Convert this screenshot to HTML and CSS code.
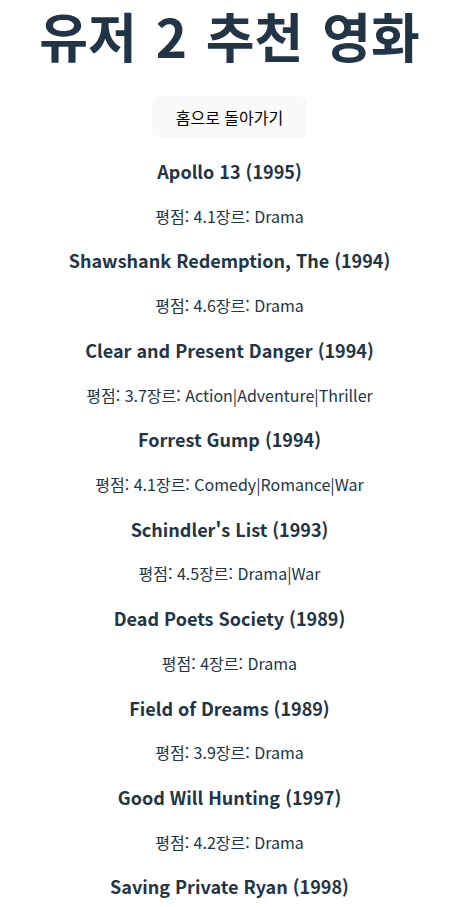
FILE: index.html
```html
<!DOCTYPE html>
<html lang="ko">
<head>
<meta charset="utf-8">
<title>유저 2 추천 영화</title>
<link rel="stylesheet" href="styles.css">
</head>
<body>
<div class="page">
  <h1 class="title">유저 2 추천 영화</h1>
  <button class="home-btn">홈으로 돌아가기</button>
  <ul class="movie-list">
    <li class="movie"><h3 class="movie-title">Apollo 13 (1995)</h3><p class="movie-info">평점: 4.1장르: Drama</p></li>
    <li class="movie"><h3 class="movie-title">Shawshank Redemption, The (1994)</h3><p class="movie-info">평점: 4.6장르: Drama</p></li>
    <li class="movie"><h3 class="movie-title">Clear and Present Danger (1994)</h3><p class="movie-info">평점: 3.7장르: Action|Adventure|Thriller</p></li>
    <li class="movie"><h3 class="movie-title">Forrest Gump (1994)</h3><p class="movie-info">평점: 4.1장르: Comedy|Romance|War</p></li>
    <li class="movie"><h3 class="movie-title">Schindler's List (1993)</h3><p class="movie-info">평점: 4.5장르: Drama|War</p></li>
    <li class="movie"><h3 class="movie-title">Dead Poets Society (1989)</h3><p class="movie-info">평점: 4장르: Drama</p></li>
    <li class="movie"><h3 class="movie-title">Field of Dreams (1989)</h3><p class="movie-info">평점: 3.9장르: Drama</p></li>
    <li class="movie"><h3 class="movie-title">Good Will Hunting (1997)</h3><p class="movie-info">평점: 4.2장르: Drama</p></li>
    <li class="movie"><h3 class="movie-title">Saving Private Ryan (1998)</h3><p class="movie-info">평점: 4.3장르: Action|Drama|War</p></li>
  </ul>
</div>
</body>
</html>
```
FILE: styles.css
```css
html, body {
  margin: 0;
  padding: 0;
  background: #ffffff;
}
body {
  font-family: "Noto Sans CJK KR", "Noto Sans", sans-serif;
  color: #213547;
  line-height: 1.5;
  font-size: 16px;
}
.page {
  width: 459px;
  display: flex;
  flex-direction: column;
  align-items: center;
  text-align: center;
}
.title {
  font-size: 53px;
  line-height: 64px;
  font-weight: 700;
  word-spacing: 4px;
  margin: 3px 0 29px;
}
.home-btn {
  font-family: inherit;
  font-size: 16px;
  font-weight: 400;
  line-height: 21px;
  color: #000;
  background: #f9f9f9;
  border: 1px solid transparent;
  border-radius: 8px;
  padding: 9.6px 23px;
}
.movie-list {
  list-style: none;
  margin: 0;
  padding: 0;
}
.movie-title {
  font-size: 18px;
  line-height: 28px;
  font-weight: 700;
  margin: 18.72px 0;
}
.movie-info {
  font-size: 16px;
  line-height: 24px;
  margin: 16px 0;
}
```
